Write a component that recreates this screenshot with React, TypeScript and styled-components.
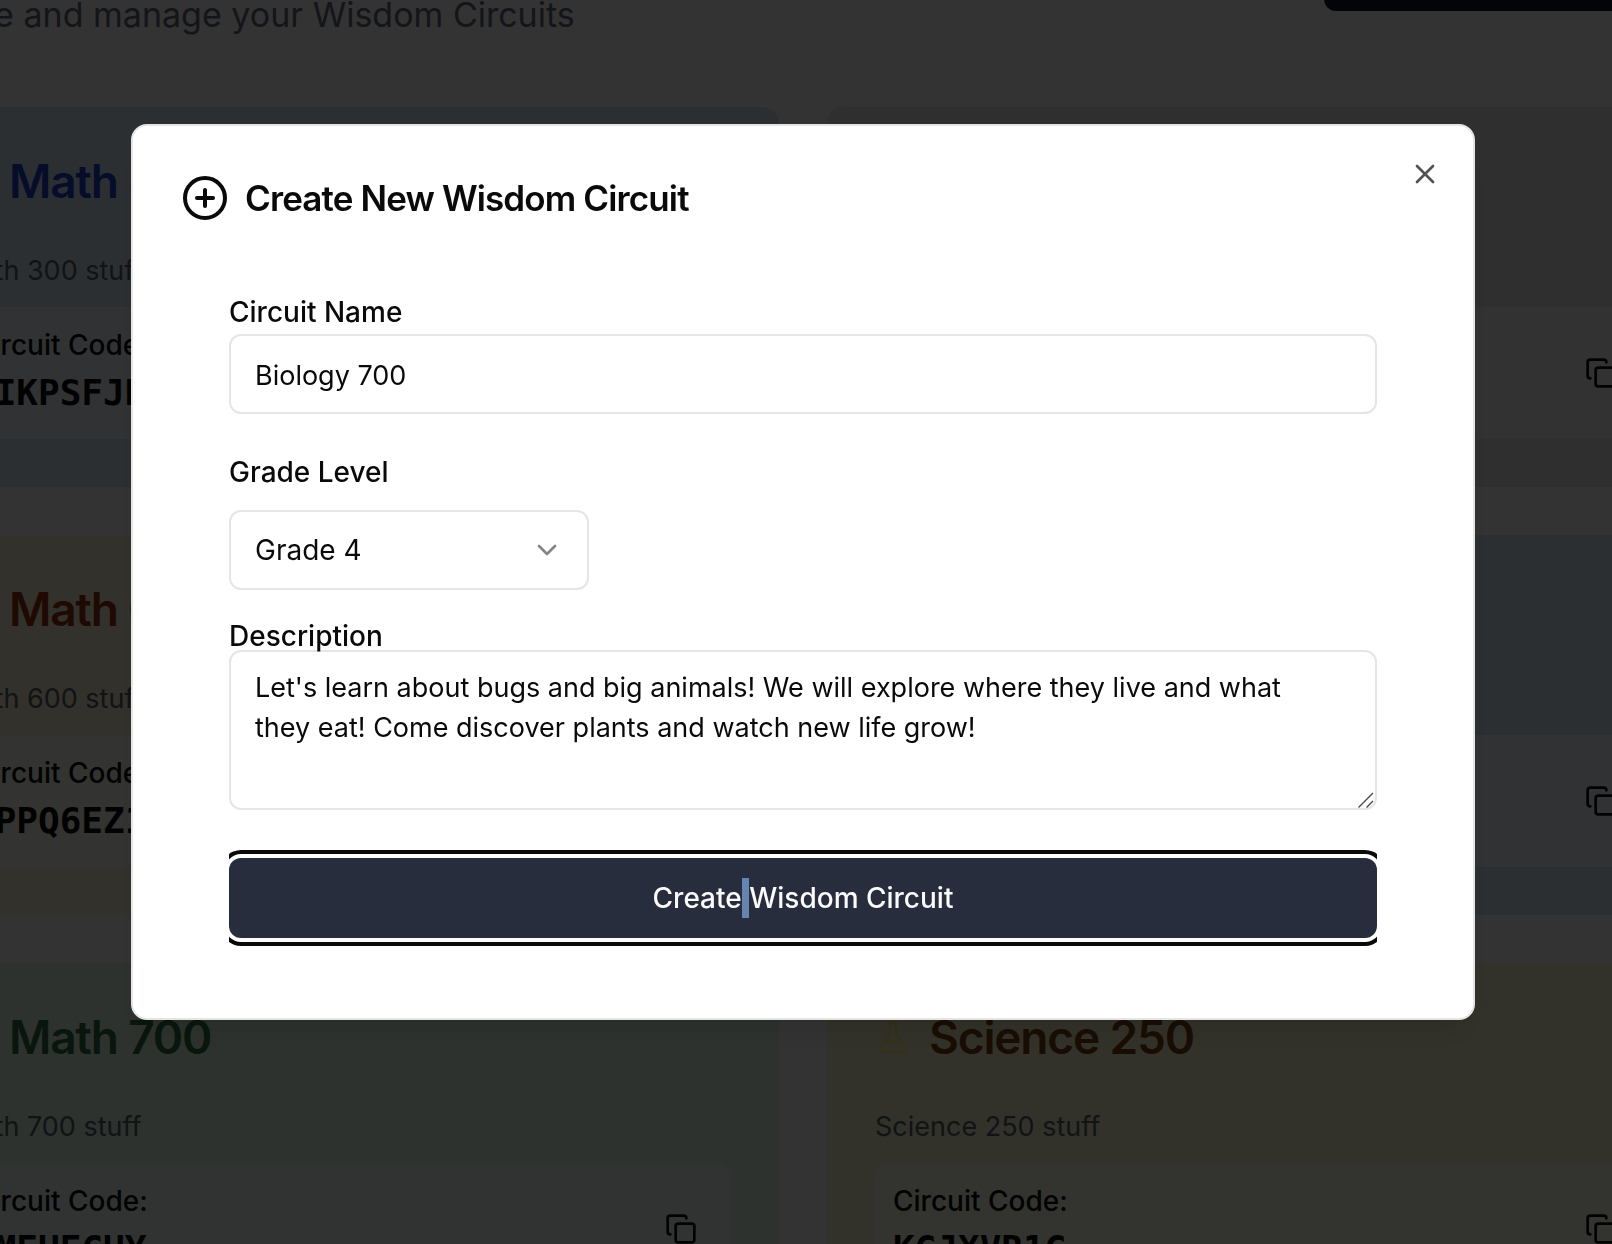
import React, { useState } from "react";
import styled, { createGlobalStyle } from "styled-components";
import { ChevronDown, CirclePlus, Copy, FlaskConical, X } from "lucide-react";

const GlobalStyle = createGlobalStyle`
  *, *::before, *::after { box-sizing: border-box; }
  body {
    margin: 0;
    overflow: hidden;
    background: #ffffff;
    color: #0a0a0a;
    font-family: Inter, "Liberation Sans", sans-serif;
    font-size: 28px;
    line-height: 40px;
  }
  button, input, select, textarea { font: inherit; color: inherit; }
  h2, p { margin: 0; }
`;

const Page = styled.div`
  display: flex;
  justify-content: center;
  height: 100vh;
  padding-right: 6px;
  overflow: hidden;
`;

const Content = styled.main`
  flex: none;
  width: 1792px;
`;

const PageHeader = styled.header`
  display: flex;
  justify-content: space-between;
  height: 112px;
  margin: -69px 0 64px;
`;

const Subtitle = styled.p`
  align-self: flex-end;
  font-size: 34px;
  line-height: 56px;
  color: #64697a;
`;

const HeaderButton = styled.button`
  width: 375px;
  height: 80px;
  border: 0;
  border-radius: 12px;
  background: #0f172a;
`;

const CardGrid = styled.div`
  display: grid;
  grid-template-columns: 1fr 1fr;
  gap: 48px;
`;

const Card = styled.article<{ $bg: string }>`
  padding: 50px 48px 48px;
  border-radius: 16px;
  background: ${(p) => p.$bg};
`;

const CardTitle = styled.h2<{ $color: string }>`
  display: flex;
  align-items: center;
  gap: 18px;
  height: 48px;
  margin-bottom: 46px;
  font-size: 46px;
  line-height: 48px;
  font-weight: 600;
  letter-spacing: -0.025em;
  color: ${(p) => p.$color};
`;

const TitleIcon = styled.span`
  display: flex;
  color: #fef08a;
`;

const CardText = styled.p`
  height: 40px;
  margin-bottom: 16px;
  font-size: 27px;
  color: #5a5f6c;
`;

const CodeBox = styled.div`
  display: flex;
  align-items: center;
  justify-content: space-between;
  padding: 18px;
  border-radius: 16px;
  background: rgba(255, 255, 255, 0.7);
`;

const CodeLabel = styled.p`
  font-weight: 500;
`;

const CodeValue = styled.p`
  height: 56px;
  font-family: "DejaVu Sans Mono", monospace;
  font-size: 36px;
  line-height: 56px;
  font-weight: 700;
`;

const CopyButton = styled.button`
  display: flex;
  padding: 16px;
  border: 0;
  background: none;
`;

const Overlay = styled.div`
  position: fixed;
  inset: 0;
  display: flex;
  align-items: center;
  justify-content: center;
  padding: 0 6px 100px 0;
  background: rgba(0, 0, 0, 0.8);
`;

const Dialog = styled.section`
  position: relative;
  width: 1344px;
  max-width: 100%;
  padding: 48px;
  border: 2px solid #e5e5e5;
  border-radius: 16px;
  background: #ffffff;
  box-shadow: 0 20px 30px -6px rgba(0, 0, 0, 0.1), 0 8px 12px -8px rgba(0, 0, 0, 0.1);
`;

const DialogTitle = styled.h2`
  display: flex;
  align-items: center;
  gap: 16px;
  font-size: 35px;
  line-height: 48px;
  font-weight: 600;
  letter-spacing: -0.025em;
`;

const CloseButton = styled.button`
  position: absolute;
  top: 32px;
  right: 32px;
  display: flex;
  padding: 0;
  border: 0;
  background: none;
  opacity: 0.7;
`;

const Form = styled.form`
  display: flex;
  flex-direction: column;
  padding: 76px 48px 24px;
`;

const Field = styled.div<{ $gap: number; $after: number }>`
  display: flex;
  flex-direction: column;
  align-items: flex-start;
  gap: ${(p) => p.$gap}px;
  margin-bottom: ${(p) => p.$after}px;
`;

const Label = styled.label`
  position: relative;
  z-index: 1;
  line-height: 28px;
  font-weight: 500;
`;

const TextInput = styled.input`
  width: 100%;
  height: 80px;
  padding: 2px 24px 0;
  border: 2px solid #e5e5e5;
  border-radius: 12px;
  background: #ffffff;
  font-size: 27px;
  outline: none;
`;

const SelectWrap = styled.div`
  display: grid;
  width: 360px;
  align-items: center;
  > * { grid-area: 1 / 1; }
  > svg { justify-self: end; margin-right: 26px; color: #858585; pointer-events: none; }
`;

const Select = styled.select`
  width: 100%;
  height: 80px;
  padding: 0 24px;
  border: 2px solid #e5e5e5;
  border-radius: 12px;
  background: #ffffff;
  font-size: 28px;
  appearance: none;
`;

const TextAreaWrap = styled.div`
  position: relative;
  width: 100%;
`;

const TextArea = styled.textarea`
  display: block;
  width: 100%;
  height: 160px;
  padding: 16px 48px 16px 24px;
  border: 2px solid #e5e5e5;
  border-radius: 12px;
  background: #ffffff;
  font-size: 27px;
  resize: none;
  outline: none;
`;

const Grip = styled.svg`
  position: absolute;
  right: 3px;
  bottom: 2px;
  pointer-events: none;
`;

const SubmitRow = styled.div`
  padding: 8px 0;
  overflow: hidden;
`;

const SubmitButton = styled.button`
  display: block;
  width: 100%;
  height: 80px;
  border: 0;
  border-radius: 12px;
  background: #272d3d;
  color: #fafafa;
  font-weight: 500;
  box-shadow: 0 0 0 4px #ffffff, 0 0 0 8px #0a0a0a;
`;

const Highlight = styled.span`
  padding: 3px 0;
  background: #6684b0;
`;

type Circuit = {
  name: string;
  text: string;
  code: string;
  bg: string;
  color: string;
};

const circuits: Circuit[] = [
  { name: "Math 300", text: "Math 300 stuff", code: "DIKPSFJR", bg: "#d9ebf7", color: "#1d40d0" },
  { name: "", text: "", code: "", bg: "#ebebf0", color: "#1f2937" },
  { name: "Math 600", text: "Math 600 stuff", code: "TPPQ6EZ1", bg: "#faf3d9", color: "#9a3412" },
  { name: "", text: "", code: "", bg: "#d9ebf7", color: "#1f2937" },
  { name: "Math 700", text: "Math 700 stuff", code: "HMEUECUY", bg: "#e0f7e4", color: "#2f7040" },
  { name: "Science 250", text: "Science 250 stuff", code: "KGJXVR1G", bg: "#fafad0", color: "#7c4312" },
];

function CircuitCard({ circuit }: { circuit: Circuit }) {
  return (
    <Card $bg={circuit.bg}>
      <CardTitle $color={circuit.color}>
        <TitleIcon>
          <FlaskConical size={36} />
        </TitleIcon>
        {circuit.name}
      </CardTitle>
      <CardText>{circuit.text}</CardText>
      <CodeBox>
        <div>
          <CodeLabel>Circuit Code:</CodeLabel>
          <CodeValue>{circuit.code}</CodeValue>
        </div>
        <CopyButton type="button" aria-label="Copy code">
          <Copy size={32} />
        </CopyButton>
      </CodeBox>
    </Card>
  );
}

export default function App() {
  const [name, setName] = useState("Biology 700");
  const [grade, setGrade] = useState("4");
  const [description, setDescription] = useState(
    "Let's learn about bugs and big animals! We will explore where they live and what they eat! Come discover plants and watch new life grow!"
  );

  return (
    <>
      <GlobalStyle />
      <Page>
        <Content>
          <PageHeader>
            <Subtitle>Create and manage your Wisdom Circuits</Subtitle>
            <HeaderButton type="button" aria-label="New circuit" />
          </PageHeader>
          <CardGrid>
            {circuits.map((c, i) => (
              <CircuitCard key={i} circuit={c} />
            ))}
          </CardGrid>
        </Content>
      </Page>
      <Overlay>
        <Dialog role="dialog" aria-modal="true" aria-labelledby="dialog-title">
          <DialogTitle id="dialog-title">
            <CirclePlus size={48} />
            Create New Wisdom Circuit
          </DialogTitle>
          <CloseButton type="button" aria-label="Close">
            <X size={32} />
          </CloseButton>
          <Form onSubmit={(e) => e.preventDefault()}>
            <Field $gap={8} $after={44}>
              <Label htmlFor="name">Circuit Name</Label>
              <TextInput id="name" value={name} onChange={(e) => setName(e.target.value)} />
            </Field>
            <Field $gap={24} $after={32}>
              <Label htmlFor="grade">Grade Level</Label>
              <SelectWrap>
                <Select id="grade" value={grade} onChange={(e) => setGrade(e.target.value)}>
                  <option value="4">Grade 4</option>
                </Select>
                <ChevronDown size={32} />
              </SelectWrap>
            </Field>
            <Field $gap={0} $after={40}>
              <Label htmlFor="description">Description</Label>
              <TextAreaWrap>
                <TextArea
                  id="description"
                  value={description}
                  onChange={(e) => setDescription(e.target.value)}
                />
                <Grip width="16" height="16" viewBox="0 0 16 16" stroke="#4a4a4a" strokeWidth="1.4">
                  <path d="M0.5 15.5 15 1M8.5 15.5 15 9" />
                </Grip>
              </TextAreaWrap>
            </Field>
            <SubmitRow>
              <SubmitButton type="submit">
                Create<Highlight> </Highlight>Wisdom Circuit
              </SubmitButton>
            </SubmitRow>
          </Form>
        </Dialog>
      </Overlay>
    </>
  );
}
